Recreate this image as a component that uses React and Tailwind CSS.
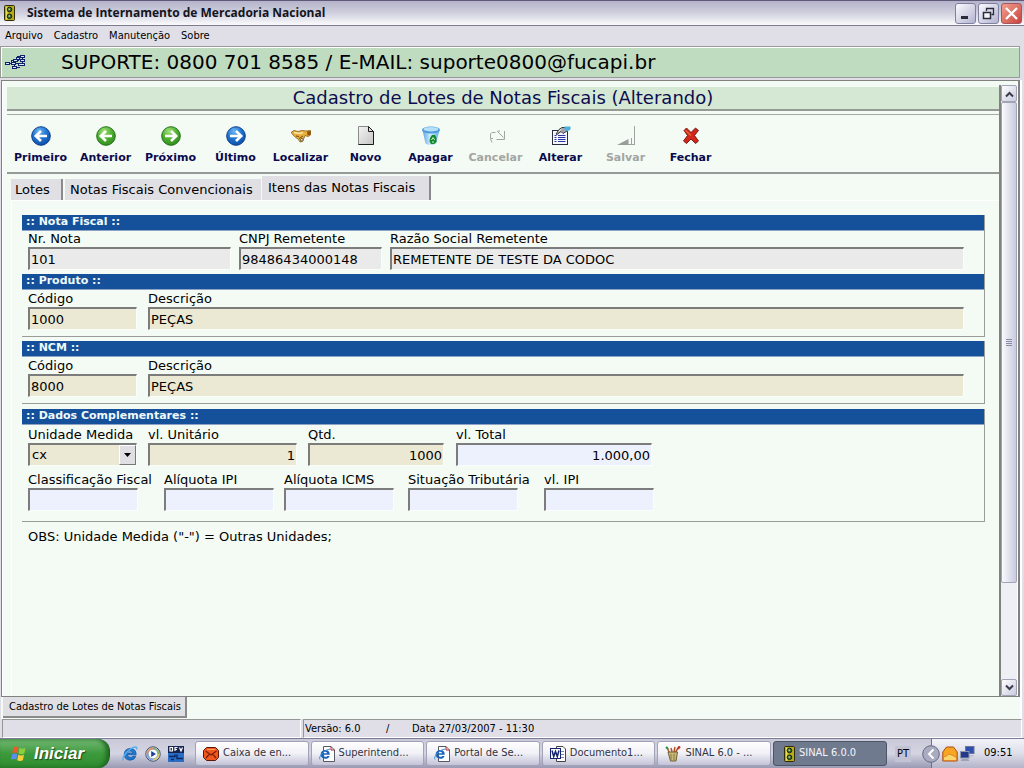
import React from "react";

const VERDANA = "font-['DejaVu_Sans',sans-serif]";
const TAHOMA = "font-['DejaVu_Sans_Condensed','DejaVu_Sans',sans-serif]";

function TrafficLight({ className }) {
  return (
    <svg className={className} viewBox="0 0 11 16" aria-hidden="true">
      <rect x="0.5" y="0.5" width="10" height="15" rx="1" fill="#b9ab1e" stroke="#2f2c08" />
      <rect x="2" y="1.500" width="1.500" height="13" fill="#e6dc5a" />
      <circle cx="5.500" cy="4.500" r="2.300" fill="#3f6b2d" stroke="#15240c" />
      <circle cx="5.500" cy="11.300" r="2.300" fill="#3f6b2d" stroke="#15240c" />
      <rect x="4.500" y="3.500" width="1.500" height="1.500" fill="#a7d58b" />
      <rect x="4.500" y="10.300" width="1.500" height="1.500" fill="#a7d58b" />
    </svg>
  );
}

function NetworkIcon() {
  return (
    <svg className="h-4 w-5" viewBox="0 0 20 16" shapeRendering="crispEdges" aria-hidden="true">
      <path d="M5 9.500H14M6 9.500V6.500H14M12.500 6.500V2.500H15M9.500 10V13M11 13.500H15" fill="none" stroke="#10206a" />
      <g fill="#d8ecff" stroke="#10206a">
        <rect x="0.5" y="8.500" width="4" height="2" />
        <rect x="6.500" y="8.500" width="4" height="2" />
        <rect x="8.500" y="5.500" width="4" height="2" />
        <rect x="15.500" y="1.500" width="4" height="2" />
        <rect x="11.500" y="3.500" width="3" height="2" />
        <rect x="15.500" y="5.500" width="4" height="2" />
        <rect x="13.500" y="9.500" width="6" height="2" />
        <rect x="7.500" y="12.500" width="4" height="2" />
      </g>
      <path d="M17.500 4V5.500M17.500 8V9.500" fill="none" stroke="#10206a" />
    </svg>
  );
}

function ArrowBall({ tone, right }) {
  const dark = tone === "blue" ? "#0b3f8c" : "#25701a";
  const id = "ball-" + tone + (right ? "-r" : "-l");
  return (
    <svg className="size-5" viewBox="0 0 20 20" aria-hidden="true">
      <defs>
        <radialGradient id={id} cx="0.4" cy="0.25" r="0.8">
          <stop offset="0" stopColor={tone === "blue" ? "#6fb5f2" : "#a4e07c"} />
          <stop offset="0.5" stopColor={tone === "blue" ? "#1f74d0" : "#4fb031"} />
          <stop offset="1" stopColor={tone === "blue" ? "#0d4aa3" : "#2f8a1d"} />
        </radialGradient>
      </defs>
      <circle cx="10" cy="10" r="9.300" fill={`url(#${id})`} stroke={dark} />
      <path
        d={right ? "M4 10H15M10 5L15.200 10L10 15" : "M16 10H5M10 5L4.800 10L10 15"}
        fill="none"
        stroke="#fff"
        strokeWidth="2.600"
      />
    </svg>
  );
}

function HandIcon() {
  return (
    <svg className="size-5" viewBox="0 0 20 20" aria-hidden="true">
      <path d="M0 6.500L3 4.500L7 5.500L11 4.500L15 5L19.500 4.500L19.500 9L17 10.500L14 9.500L13 12L11.500 15.500L9 16L7.500 13.500L3.500 10.500Z" fill="#e9ae3c" stroke="#8a5a14" strokeWidth="0.8" />
      <path d="M3 6.500L9 7.500L12 6.500" fill="none" stroke="#fbe7a6" strokeWidth="1.600" />
      <path d="M5 10L8 10.500M8 12.500L12 10" stroke="#7b4d10" fill="none" />
      <path d="M16 5.500L19.500 5V8.500L16.500 9.500Z" fill="#8a4f12" />
      <circle cx="10.800" cy="13.800" r="1.400" fill="#d8d4b8" stroke="#55502e" strokeWidth="0.8" />
    </svg>
  );
}

function PageIcon() {
  return (
    <svg className="size-5" viewBox="0 0 20 20" aria-hidden="true">
      <defs>
        <linearGradient id="sheet" x1="0" y1="0" x2="1" y2="1">
          <stop offset="0" stopColor="#f4f4f4" />
          <stop offset="1" stopColor="#c4c4c4" />
        </linearGradient>
      </defs>
      <path d="M2.500 0.500H12.500L17.500 5.500V18.500H2.500Z" fill="url(#sheet)" stroke="#8b8b8b" />
      <path d="M12.500 0.500V5.500H17.500V18.500H2.500" fill="none" stroke="#1c1c1c" />
      <path d="M12.500 0.500L17.500 5.500" stroke="#1c1c1c" />
    </svg>
  );
}

function BinIcon() {
  return (
    <svg className="size-5" viewBox="0 0 20 20" aria-hidden="true">
      <defs>
        <linearGradient id="bin" x1="0" x2="1">
          <stop offset="0" stopColor="#57a4e2" />
          <stop offset="0.45" stopColor="#cdeafd" />
          <stop offset="1" stopColor="#5eaee6" />
        </linearGradient>
      </defs>
      <path d="M1.500 4L4.500 17.500Q9.500 20.500 15 17.500L18.500 4Z" fill="url(#bin)" />
      <ellipse cx="10" cy="4" rx="9" ry="3.400" fill="#4e9be0" />
      <ellipse cx="10" cy="3.200" rx="7.500" ry="2.300" fill="#b5def9" />
      <path d="M9 12L11 9H14L15.500 12V16L13 18H10L8.500 15.500Z" fill="#128a2c" />
      <path d="M10.500 14L12 11.500L13.700 14M11 16H13" fill="none" stroke="#d3f3d8" />
    </svg>
  );
}

function CancelIcon() {
  return (
    <svg className="size-5" viewBox="0 0 20 20" aria-hidden="true">
      <path d="M9.500 6.500H6L4.500 8V12.500H7M4.500 13L6 16.500M11 5L17.500 11.500M12 5H14M18.500 5V13.500H10.500" fill="none" stroke="#a3a5a3" />
    </svg>
  );
}

function EditIcon() {
  return (
    <svg className="size-5" viewBox="0 0 20 20" aria-hidden="true">
      <rect x="1.500" y="4.500" width="15" height="14" fill="#f6f6ff" stroke="#2b2b3c" />
      <path d="M3.500 9.500H5.500M3.500 11.500H5.500M3.500 13.500H5.500M3.500 15.500H5.500M7 9.500H14.500M7 11.500H14.500M7 13.500H14.500M7 15.500H14.500" stroke="#2c35a8" strokeWidth="1.200" />
      <path d="M5 8L8 3.500L11 1.500L16 1.500V5L12 7.500L10 5.500L6 8.500Z" fill="#a3a4a9" stroke="#2c2c2c" strokeWidth="0.900" />
      <path d="M7.500 5.500L10.500 3" stroke="#fff" />
      <path d="M13.500 0.500H19.500V3.500L16 5.500L13.500 3Z" fill="#4ab0de" />
    </svg>
  );
}

function SaveIcon() {
  return (
    <svg className="size-5" viewBox="0 0 20 20" aria-hidden="true">
      <path d="M18.500 0V19" fill="none" stroke="#a0a2a0" />
      <path d="M1 19L12.500 13V19Z" fill="#9a9c9a" />
      <path d="M15.500 12V18.500M12 18.500H19" fill="none" stroke="#a0a2a0" />
    </svg>
  );
}

function CloseIcon() {
  return (
    <svg className="size-5" viewBox="0 0 20 20" aria-hidden="true">
      <path d="M3 4.500L5.500 2L10 6.500L14.500 2L17.500 4.500L13.500 9.500L17.500 15L14.500 17.500L10 13L5.500 17.500L2.500 15L6.500 9.500Z" fill="#d0261c" stroke="#6e1309" strokeWidth="0.900" />
      <path d="M4.500 4.500L10 9.500" stroke="#f2683a" strokeWidth="1.200" />
    </svg>
  );
}

function InternetIcon({ className }) {
  return (
    <svg className={className} viewBox="0 0 16 16" aria-hidden="true">
      <path d="M14.200 8.800H5.400Q5.800 11.300 8.300 11.300Q10 11.300 10.800 10.200H13.900Q12.500 14.200 8.200 14.200Q2.300 13.900 2.200 8.300Q2.600 2.600 8.300 2.400Q14.200 2.600 14.200 8.800ZM5.500 6.900H10.900Q10.400 5 8.200 5Q6 5 5.500 6.900Z" fill="#1f78cf" stroke="#0f4f9c" strokeWidth="0.700" />
      <path d="M1.500 14.500Q-0.500 12.500 4.500 6.500Q9 1.500 13.500 1Q15.500 1.200 14.500 3.500" fill="none" stroke="#58b1ee" strokeWidth="1.400" />
    </svg>
  );
}

function InternetPageIcon() {
  return (
    <svg className="size-4 shrink-0" viewBox="0 0 16 16" aria-hidden="true">
      <path d="M4.500 0.500H12L15.500 4V15.500H4.500Z" fill="#fff" stroke="#555a66" />
      <path d="M12 0.500V4H15.500" fill="none" stroke="#b3202a" />
      <path d="M10.800 8.700H4Q4.300 10.800 6.300 10.800Q7.700 10.800 8.300 9.900H10.600Q9.500 12.800 6.200 12.800Q1.700 12.500 1.600 8.300Q2 4.200 6.300 4Q10.800 4.200 10.800 8.700ZM4 7.200H8.300Q7.900 5.700 6.200 5.700Q4.500 5.700 4 7.200Z" fill="#1b62b8" />
      <path d="M1 13.500Q-0.500 11.500 3.500 7Q7 3.500 11 3" fill="none" stroke="#3d8fdb" />
    </svg>
  );
}

function MailIcon() {
  return (
    <svg className="h-4 w-4 shrink-0" viewBox="0 0 16 16" aria-hidden="true">
      <path d="M3.500 1.500H12.500L15.500 4.500V11.500L12.500 14.500H3.500L0.500 11.500V4.500Z" fill="#f0571c" stroke="#5b1808" />
      <path d="M2.500 5L8 9L13.500 5M3 12L6.500 8M13 12L9.500 8" fill="none" stroke="#7a1f08" strokeWidth="1.200" />
      <path d="M4 3.500H12" stroke="#ff9a5c" />
    </svg>
  );
}

function WordIcon() {
  return (
    <svg className="size-4 shrink-0" viewBox="0 0 16 16" aria-hidden="true">
      <path d="M6.500 0.500H13L15.500 3V15.500H6.500Z" fill="#fff" stroke="#444" />
      <path d="M11 5.500H14M11 8.500H14M11 11.500H14" stroke="#7b86b8" />
      <rect x="0.500" y="2.500" width="10" height="10" fill="#fff" stroke="#15246e" />
      <path d="M2 4.500L3.700 10.500L5.500 5.500L7.300 10.500L9 4.500" fill="none" stroke="#15246e" strokeWidth="1.500" />
    </svg>
  );
}

function PaintIcon() {
  return (
    <svg className="size-4 shrink-0" viewBox="0 0 16 16" aria-hidden="true">
      <path d="M4 6L2 1M7 6L6 2M10 7L14 0.500M9 6L10 1" stroke="#b0562a" strokeWidth="1.500" />
      <path d="M1 1L3 3" stroke="#2c9a45" strokeWidth="2" />
      <path d="M13 3L15 0.500" stroke="#c22d22" strokeWidth="2" />
      <path d="M3 6H12.500L11 15H5.500Z" fill="#c9b679" stroke="#6f6133" />
      <path d="M6 8V14M9 8V14" stroke="#8b7a42" />
    </svg>
  );
}

function MediaIcon() {
  return (
    <svg className="size-4" viewBox="0 0 16 16" aria-hidden="true">
      <circle cx="8" cy="8" r="7.200" fill="#e8edf5" stroke="#3b4766" />
      <path d="M8 1.500A6.500 6.500 0 0 1 14.500 8H8Z" fill="#7fb661" />
      <path d="M8 1.500A6.500 6.500 0 0 0 1.500 8H8Z" fill="#e2925a" />
      <path d="M8 14.500A6.500 6.500 0 0 1 1.500 8H8Z" fill="#7da7dd" />
      <path d="M8 14.500A6.500 6.500 0 0 0 14.500 8H8Z" fill="#e0cd64" />
      <circle cx="8" cy="8" r="4.800" fill="#f8fbff" stroke="#7a86a3" strokeWidth="0.600" />
      <path d="M6.200 5L11 8L6.200 11Z" fill="#1c3f9c" />
    </svg>
  );
}

function FlagIcon() {
  return (
    <svg className="h-[18px] w-[18px]" viewBox="0 0 18 18" aria-hidden="true">
      <path d="M3.500 2.500Q6 1 8.500 2.500L7.500 8Q5 6.800 2.300 8Z" fill="#ee5a2a" />
      <path d="M9.500 3Q12 4.500 15.500 3L14.300 8.500Q11.500 10 8.500 8.500Z" fill="#8ccf3d" />
      <path d="M2 9.200Q4.800 8 7.300 9.200L6.300 14.700Q4 13.500 1 14.700Z" fill="#5a8ff0" />
      <path d="M8.300 9.700Q11 11.200 14 9.700L12.900 15.200Q10 16.700 7.200 15.200Z" fill="#f7cf3a" />
    </svg>
  );
}

const TOOLS = [
  { label: "Primeiro", icon: <ArrowBall tone="blue" /> },
  { label: "Anterior", icon: <ArrowBall tone="green" /> },
  { label: "Próximo", icon: <ArrowBall tone="green" right /> },
  { label: "Último", icon: <ArrowBall tone="blue" right /> },
  { label: "Localizar", icon: <HandIcon /> },
  { label: "Novo", icon: <PageIcon /> },
  { label: "Apagar", icon: <BinIcon /> },
  { label: "Cancelar", icon: <CancelIcon />, disabled: true },
  { label: "Alterar", icon: <EditIcon /> },
  { label: "Salvar", icon: <SaveIcon />, disabled: true },
  { label: "Fechar", icon: <CloseIcon /> },
];

const TASKS = [
  { label: "Caixa de en...", icon: <MailIcon /> },
  { label: "Superintend...", icon: <InternetPageIcon /> },
  { label: "Portal de Se...", icon: <InternetPageIcon /> },
  { label: "Documento1...", icon: <WordIcon /> },
  { label: "SINAL 6.0 - ...", icon: <PaintIcon /> },
  { label: "SINAL 6.0.0", icon: <TrafficLight className="h-4 w-[11px] shrink-0" />, active: true },
];

const FIELD_TONES = {
  gray: "bg-[#eaeaea]",
  sand: "bg-[#ebe8d3]",
  blue: "bg-[#edf1fd]",
};

function Field({ id, label, value = "", tone, className, inputClass = "w-full", right }) {
  return (
    <div className={className}>
      <label htmlFor={id} className="block h-4 text-[13px] leading-4 whitespace-nowrap">
        {label}
      </label>
      <input
        id={id}
        type="text"
        defaultValue={value}
        className={`block h-[23px] border-t-2 border-r border-b border-l-2 border-t-[#7c7c7c] border-r-[#fafdfa] border-b-[#fafdfa] border-l-[#7c7c7c] px-px text-[13px] leading-4 outline-none ${right ? "text-right" : "text-left"} ${FIELD_TONES[tone]} ${inputClass}`}
      />
    </div>
  );
}

function Group({ title, className, children }) {
  return (
    <section className={`border-r border-[#9a9c9a] ${className}`}>
      <h2 className="h-4 border-b border-[#8fa3c4] bg-[#15509a] px-1 text-[11px] leading-[14px] font-bold text-[#eefafa]">
        {title}
      </h2>
      <div className="pr-5 pl-1.5">{children}</div>
    </section>
  );
}

function WindowButton({ label, close, children }) {
  return (
    <button
      type="button"
      aria-label={label}
      className={`flex size-[21px] items-center justify-center rounded-[3px] border ${close ? "border-[#a35560] bg-linear-to-br from-[#f0a090] to-[#c8403c]" : "border-[#7f809f] bg-linear-to-br from-[#fbfbff] to-[#b3b4cf]"}`}
    >
      <svg className="size-[15px]" viewBox="0 0 15 15" aria-hidden="true">
        {children}
      </svg>
    </button>
  );
}

function ScrollButton({ label, d }) {
  return (
    <button
      type="button"
      aria-label={label}
      className="flex h-[17px] w-full shrink-0 items-center justify-center rounded-[2px] border border-[#a3a3b8] bg-linear-to-br from-white to-[#c9cade]"
    >
      <svg className="h-2 w-[9px]" viewBox="0 0 9 8" aria-hidden="true">
        <path d={d} fill="none" stroke="#3b3b4a" strokeWidth="2" />
      </svg>
    </button>
  );
}

export default function App() {
  return (
    <div className={`flex min-h-screen flex-col bg-[#e0dfe8] text-black ${VERDANA}`}>
      <header className="flex h-[26px] items-center border-t border-b border-t-[#5f5a7a] border-b-[#7c7b92] bg-linear-to-b from-[#b4b3ca] via-[#d0d0de] to-[#fbfbfd] pr-0.5 pl-1">
        <TrafficLight className="h-4 w-[11px]" />
        <h1 className="ml-3 flex-1 font-['Open_Sans',sans-serif] text-[12px] leading-4 font-bold text-[#14141c]">
          Sistema de Internamento de Mercadoria Nacional
        </h1>
        <div className="flex gap-0.5">
          <WindowButton label="Minimizar">
            <path d="M3 11.500H10" stroke="#2b2b3c" strokeWidth="3" />
          </WindowButton>
          <WindowButton label="Restaurar">
            <path d="M5.500 5V2.500H12.500V8.500H10.500" fill="none" stroke="#2b2b3c" strokeWidth="1.300" />
            <path d="M2.500 6.500H9.500V12.500H2.500Z" fill="#f4f4fa" stroke="#2b2b3c" strokeWidth="1.500" />
          </WindowButton>
          <WindowButton label="Fechar janela" close>
            <path d="M2 2L13 13M13 2L2 13" stroke="#fff" strokeWidth="2.300" />
          </WindowButton>
        </div>
      </header>

      <nav className={`flex h-5 items-center gap-[11px] pl-[5px] text-[11px] ${TAHOMA}`}>
        {["Arquivo", "Cadastro", "Manutenção", "Sobre"].map((item) => (
          <button key={item} type="button" className="leading-4">
            {item}
          </button>
        ))}
      </nav>

      <div className="mr-1 flex h-8 items-center gap-9 border border-[#989a98] bg-[#c0dcc0] pl-1 shadow-[inset_0_1px_0_#fff,inset_1px_0_0_#fff]">
        <NetworkIcon />
        <p className="text-[20px] leading-6 whitespace-nowrap">
          SUPORTE: 0800 701 8585 / E-MAIL: suporte0800@fucapi.br
        </p>
      </div>

      <main className="mt-0.5 mr-0.5 ml-px flex flex-1 flex-col border-r-2 border-r-white bg-[#f4fbf4]">
        <div className="flex flex-1 border-t border-r-2 border-b border-l border-[#808280]">
          <div className="flex min-w-0 flex-1 flex-col border-l border-white pt-1.5 pl-1">
            <h2 className="h-6 border-b-2 border-[#969a96] bg-[#d5e8d3] text-center text-[18px] leading-[22px] text-[#0c0c50]">
              Cadastro de Lotes de Notas Fiscais (Alterando)
            </h2>
            <div className="mt-[3px] flex h-[60px] border-t border-b-2 border-t-[#a8aaa8] border-b-[#969a96] pl-px">
              {TOOLS.map((tool) => (
                <button
                  key={tool.label}
                  type="button"
                  disabled={tool.disabled}
                  className={`flex w-[65px] shrink-0 flex-col items-center pt-[11px] text-[11px] font-bold ${tool.disabled ? "text-[#a3a5a3]" : "text-[#0a0a4e]"}`}
                >
                  {tool.icon}
                  <span className="mt-1 leading-4">{tool.label}</span>
                </button>
              ))}
            </div>

            <div role="tablist" className="mt-0.5 flex h-6 items-end pl-1 text-[13px] leading-4">
              <button type="button" role="tab" aria-selected="false" className="h-[21px] w-[52px] border-r-2 border-[#8a8a8a] bg-[#e0dfe4] pl-1 text-left">
                Lotes
              </button>
              <button type="button" role="tab" aria-selected="false" className="ml-0.5 h-[21px] w-[196px] bg-[#e0dfe4] pl-[5px] text-left whitespace-nowrap">
                Notas Fiscais Convencionais
              </button>
              <button type="button" role="tab" aria-selected="true" className="ml-px h-6 w-[169px] border-r-2 border-[#8a8a8a] bg-[#e0dfe4] pl-1.5 text-left whitespace-nowrap">
                Itens das Notas Fiscais
              </button>
            </div>

            <form className="ml-1 flex-1 border-t border-l border-white pt-3.5 pr-3.5 pl-2.5" onSubmit={(e) => e.preventDefault()}>
              <Group title=":: Nota Fiscal ::" className="pb-1">
                <div className="flex gap-2">
                  <Field id="nota" label="Nr. Nota" value="101" tone="gray" className="w-[203px]" />
                  <Field id="cnpj" label="CNPJ Remetente" value="98486434000148" tone="gray" className="w-[143px]" />
                  <Field id="razao" label="Razão Social Remetente" value="REMETENTE DE TESTE DA CODOC" tone="gray" className="flex-1" />
                </div>
              </Group>
              <Group title=":: Produto ::" className="border-b pb-1.5">
                <div className="flex gap-[11px] pt-px">
                  <Field id="prod-cod" label="Código" value="1000" tone="sand" className="w-[109px]" />
                  <Field id="prod-desc" label="Descrição" value="PEÇAS" tone="sand" className="flex-1" />
                </div>
              </Group>
              <Group title=":: NCM ::" className="mt-1 border-b pb-1.5">
                <div className="flex gap-[11px] pt-px">
                  <Field id="ncm-cod" label="Código" value="8000" tone="sand" className="w-[109px]" />
                  <Field id="ncm-desc" label="Descrição" value="PEÇAS" tone="sand" className="flex-1" />
                </div>
              </Group>
              <Group title=":: Dados Complementares ::" className="mt-[5px] border-b pb-2.5">
                <div className="flex pt-0.5">
                  <div className="w-[120px]">
                    <label htmlFor="unidade" className="block h-4 text-[13px] leading-4 whitespace-nowrap">
                      Unidade Medida
                    </label>
                    <div className="relative h-[23px] w-[109px]">
                      <select
                        id="unidade"
                        defaultValue="cx"
                        className="block h-full w-full appearance-none border-t-2 border-r border-b border-l-2 border-t-[#7c7c7c] border-r-[#fafdfa] border-b-[#fafdfa] border-l-[#7c7c7c] bg-[#ebe8d3] pl-0.5 text-[13px] leading-4 outline-none"
                      >
                        <option>cx</option>
                        <option>-</option>
                      </select>
                      <span className="pointer-events-none absolute top-0.5 right-px bottom-px flex w-[17px] items-center justify-center border border-t-white border-r-[#777] border-b-[#777] border-l-white bg-[#e0dfe3]">
                        <svg className="h-1 w-[7px]" viewBox="0 0 7 4" aria-hidden="true">
                          <path d="M0 0H7L3.500 4Z" />
                        </svg>
                      </span>
                    </div>
                  </div>
                  <Field id="unitario" label="vl. Unitário" value="1" tone="sand" className="w-40" inputClass="w-[149px]" right />
                  <Field id="qtd" label="Qtd." value="1000" tone="sand" className="w-[148px]" inputClass="w-[136px]" right />
                  <Field id="total" label="vl. Total" value="1.000,00" tone="blue" className="w-[196px]" right />
                </div>
                <div className="flex pt-1.5">
                  <Field id="classif" label="Classificação Fiscal" tone="blue" className="w-[136px]" inputClass="w-[110px]" />
                  <Field id="aliq-ipi" label="Alíquota IPI" tone="blue" className="w-[120px]" inputClass="w-[110px]" />
                  <Field id="aliq-icms" label="Alíquota ICMS" tone="blue" className="w-[124px]" inputClass="w-[110px]" />
                  <Field id="situacao" label="Situação Tributária" tone="blue" className="w-[136px]" inputClass="w-[110px]" />
                  <Field id="vl-ipi" label="vl. IPI" tone="blue" className="w-[110px]" />
                </div>
              </Group>
              <p className="pt-[7px] pl-1.5 text-[13px] leading-4">
                OBS: Unidade Medida ("-") = Outras Unidades;
              </p>
            </form>
          </div>

          <div className="mt-1 flex w-[18px] shrink-0 flex-col border-l-2 border-[#808280] bg-[#efeff6]">
            <ScrollButton label="Rolar para cima" d="M1 6.500L4.500 3L8 6.500" />
            <div className="flex flex-1 flex-col">
              <div className="flex grow-[5] basis-0 flex-col items-center justify-center gap-px rounded-[2px] border border-[#a3a3b8] bg-linear-to-r from-[#fafafe] to-[#c9cade]">
                <span className="h-px w-1.5 bg-[#8a8ba8]" />
                <span className="h-px w-1.5 bg-[#8a8ba8]" />
                <span className="h-px w-1.5 bg-[#8a8ba8]" />
                <span className="h-px w-1.5 bg-[#8a8ba8]" />
              </div>
              <div className="grow basis-0" />
            </div>
            <ScrollButton label="Rolar para baixo" d="M1 1.500L4.500 5L8 1.500" />
          </div>
          <div className="w-px bg-white" />
        </div>

        <div className="flex h-[22px] items-start pl-0.5">
          <button type="button" className={`h-[21px] border-r-2 border-b-2 border-[#8a8a8a] bg-[#e0dfe4] pr-1 pl-1.5 text-[11px] leading-5 whitespace-nowrap ${TAHOMA}`}>
            Cadastro de Lotes de Notas Fiscais
          </button>
        </div>
      </main>

      <footer className={`flex h-[19px] gap-0.5 pr-0.5 pl-0.5 text-[11px] leading-[17px] ${TAHOMA}`}>
        <div className="w-[299px] border border-t-[#969696] border-r-white border-b-white border-l-[#969696]" />
        <div className="flex flex-1 border border-t-[#969696] border-r-white border-b-white border-l-[#969696] pl-px whitespace-pre">
          <span className="w-[81px]">Versão: 6.0</span>
          <span className="w-[26px]">/</span>
          <span>Data 27/03/2007 - 11:30</span>
        </div>
      </footer>

      <div className={`flex h-[30px] items-stretch border-t border-[#7c7c96] bg-linear-to-b from-[#c9c9d9] via-[#d4d4e2] to-[#9a9ab4] text-[11px] ${TAHOMA}`}>
        <button
          type="button"
          className="flex w-[110px] shrink-0 items-center rounded-r-xl border-r border-[#1d5c1d] bg-linear-to-b from-[#75b875] via-[#3c9a3c] to-[#2f8a2f] pl-2.5 shadow-[inset_-3px_0_4px_#1f6a1f]"
        >
          <FlagIcon />
          <span className="ml-1.5 font-['Liberation_Sans',sans-serif] text-[17px] leading-5 font-bold text-white italic [text-shadow:1px_1px_1px_#1d4d1d]">
            Iniciar
          </span>
        </button>
        <div className="flex w-[85px] shrink-0 items-center gap-[7px] pl-3">
          <InternetIcon className="size-4" />
          <MediaIcon />
          <svg className="size-4" viewBox="0 0 16 16" aria-hidden="true">
            <rect width="16" height="7" fill="#14234f" />
            <rect y="7" width="16" height="9" fill="#2b6cc4" />
            <path d="M2 1.500H4.500V5H2ZM7 5V1.500H9.500M7 3.500H9M11.500 1.500L13 5L14.500 1.500" fill="none" stroke="#fff" strokeWidth="1.200" />
            <path d="M1 10.500H7V8.500M9 8.500V12.500H15M3 13.500H6" fill="none" stroke="#0e2a66" strokeWidth="1.500" />
          </svg>
        </div>
        <div className="flex min-w-0 flex-1 items-center gap-0.5">
          {TASKS.map((task) => (
            <button
              key={task.label}
              type="button"
              className={`flex h-[25px] max-w-[114px] min-w-0 flex-1 items-center gap-1 rounded-[3px] border whitespace-nowrap ${task.active ? "border-[#4d5568] bg-[#6f7a8e] pl-2.5 text-[#f4f5fa]" : "border-[#a2a2b8] bg-linear-to-b from-white via-[#f0f0f6] to-[#c3c3d8] pl-[7px] text-[#33333f]"}`}
            >
              {task.icon}
              <span className="truncate">{task.label}</span>
            </button>
          ))}
        </div>
        <div className="flex w-11 shrink-0 items-center pl-2">
          <span className="bg-[#c3c3d6] px-0.5 leading-4">PT</span>
        </div>
        <div className="flex w-[93px] shrink-0 items-center border-l border-[#6f6f88] bg-linear-to-b from-[#f2f2f8] via-[#dedeea] to-[#b4b4ca]">
          <button type="button" aria-label="Mostrar ícones ocultos" className="-mr-0.5 -ml-2.5 size-[18px] shrink-0">
            <svg className="size-full" viewBox="0 0 18 18" aria-hidden="true">
              <circle cx="9" cy="9" r="8.300" fill="#a9abc0" stroke="#686a80" />
              <path d="M11.500 4.500L7 9L11.500 13.500" fill="none" stroke="#fff" strokeWidth="2" />
            </svg>
          </button>
          <svg className="ml-1 h-4 w-4 shrink-0" viewBox="0 0 16 16" aria-hidden="true">
            <path d="M0.800 6L4.500 1H11.500L15.200 6V15H0.800Z" fill="#f6a623" stroke="#b04a10" />
            <path d="M1.500 14.500V11Q4.500 10.500 7 8Q10.500 9 14.500 11.500V14.500Z" fill="#fcd66d" stroke="#d9791a" strokeWidth="0.800" />
          </svg>
          <svg className="ml-0.5 h-4 w-4 shrink-0" viewBox="0 0 16 16" aria-hidden="true">
            <rect x="5.500" y="0.500" width="8.500" height="7" fill="#2f4fb0" stroke="#6d7590" />
            <path d="M7 9H13L14 10.500H6Z" fill="#b8bccb" />
            <rect x="0.500" y="5.500" width="8.500" height="6.500" fill="#22398c" stroke="#8f96ad" />
            <path d="M2 13H8L9.500 15H0.500Z" fill="#9da2b6" />
          </svg>
          <time className="ml-2">09:51</time>
        </div>
      </div>
    </div>
  );
}
